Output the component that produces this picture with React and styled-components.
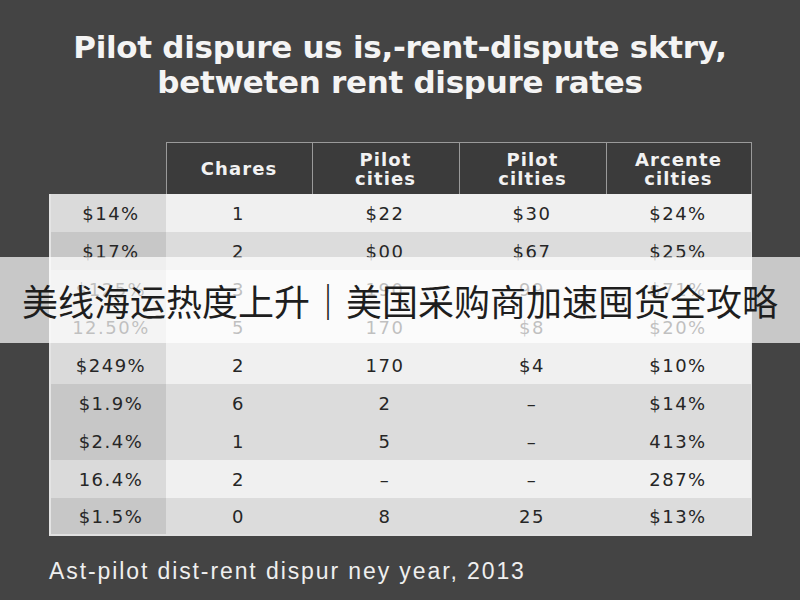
import React from "react";
import styled, { createGlobalStyle } from "styled-components";

const Global = createGlobalStyle`
  html, body { margin: 0; padding: 0; background: #444444; }
  #root { width: 800px; height: 600px; }
`;

const Page = styled.div`
  position: relative;
  width: 800px;
  height: 600px;
  background: #444444;
  display: flex;
  flex-direction: column;
  align-items: center;
  overflow: hidden;
`;

const Title = styled.h1`
  margin: 30px 0 0;
  font-family: "DejaVu Sans", sans-serif;
  font-weight: 700;
  font-size: 31px;
  line-height: 35px;
  color: #f4f4f4;
  text-align: center;
  letter-spacing: -0.3px;
  white-space: nowrap;
`;

const Table = styled.div`
  margin-top: 42px;
  width: 703px;
  display: grid;
  grid-template-columns: 117px 146px 147px 147px 146px;
  font-family: "DejaVu Sans", sans-serif;
`;

const HeadBlank = styled.div`
  height: 52px;
`;

const HeadCell = styled.div`
  height: 52px;
  box-sizing: border-box;
  background: #3b3b3b;
  border-top: 1px solid #9a9a9a;
  border-left: 1px solid #9a9a9a;
  border-right: ${(p) => (p.$last ? "1px solid #9a9a9a" : "none")};
  color: #f2f2f2;
  font-weight: 700;
  font-size: 18px;
  line-height: 19px;
  letter-spacing: 1.1px;
  display: flex;
  align-items: center;
  justify-content: center;
  text-align: center;
`;

const Cell = styled.div`
  height: 38px;
  box-sizing: border-box;
  display: flex;
  align-items: center;
  justify-content: center;
  padding-left: ${(p) => (p.$first ? "6px" : "0")};
  font-size: 18px;
  letter-spacing: 1.5px;
  color: #262626;
  background: ${(p) =>
    p.$first
      ? p.$dark
        ? "#c7c7c7"
        : "#dadada"
      : p.$dark
      ? "#dcdcdc"
      : "#f0f0f0"};
  border-left: ${(p) => (p.$first ? "2px solid #e4e4e4" : "none")};
  border-right: ${(p) => (p.$last ? "1px solid #e4e4e4" : "none")};
  border-bottom: ${(p) => (p.$bottom ? "2px solid #e0e0e0" : "none")};
`;

const Footer = styled.p`
  align-self: flex-start;
  margin: 22px 0 0 49px;
  font-family: "Liberation Sans", sans-serif;
  font-size: 23px;
  line-height: 26px;
  color: #efefef;
  letter-spacing: 1.9px;
  white-space: nowrap;
`;

const Banner = styled.div`
  position: absolute;
  left: 0;
  right: 0;
  top: 257px;
  height: 86px;
  background: rgba(255, 255, 255, 0.71);
  display: flex;
  align-items: center;
  justify-content: center;
  font-family: "Noto Sans CJK SC", sans-serif;
  font-size: 36px;
  color: #1e1e1e;
  white-space: nowrap;
`;

const headers = ["Chares", "Pilot\ncities", "Pilot\ncilties", "Arcente\ncilties"];

const rows = [
  { d: false, v: ["$14%", "1", "$22", "$30", "$24%"] },
  { d: true, v: ["$17%", "2", "$00", "$67", "$25%"] },
  { d: false, v: ["$125%", "3", "190", "99", "$71%"] },
  { d: false, v: ["12.50%", "5", "170", "$8", "$20%"] },
  { d: false, v: ["$249%", "2", "170", "$4", "$10%"] },
  { d: true, v: ["$1.9%", "6", "2", "–", "$14%"] },
  { d: true, v: ["$2.4%", "1", "5", "–", "413%"] },
  { d: false, v: ["16.4%", "2", "–", "–", "287%"] },
  { d: true, v: ["$1.5%", "0", "8", "25", "$13%"] },
];

export default function App() {
  return (
    <>
      <Global />
      <Page>
        <Title>
          Pilot dispure us is,-rent-dispute sktry,
          <br />
          betweten rent dispure rates
        </Title>
        <Table>
          <HeadBlank />
          {headers.map((h, i) => (
            <HeadCell key={h} $last={i === headers.length - 1}>
              {h.split("\n").map((l, j) => (
                <React.Fragment key={j}>
                  {j > 0 && <br />}
                  {l}
                </React.Fragment>
              ))}
            </HeadCell>
          ))}
          {rows.map((r, ri) =>
            r.v.map((val, ci) => (
              <Cell
                key={`${ri}-${ci}`}
                $dark={r.d}
                $first={ci === 0}
                $last={ci === 4}
                $bottom={ri === rows.length - 1}
              >
                {val}
              </Cell>
            ))
          )}
        </Table>
        <Footer>Ast-pilot dist-rent dispur ney year, 2013</Footer>
        <Banner>美线海运热度上升｜美国采购商加速囤货全攻略</Banner>
      </Page>
    </>
  );
}
